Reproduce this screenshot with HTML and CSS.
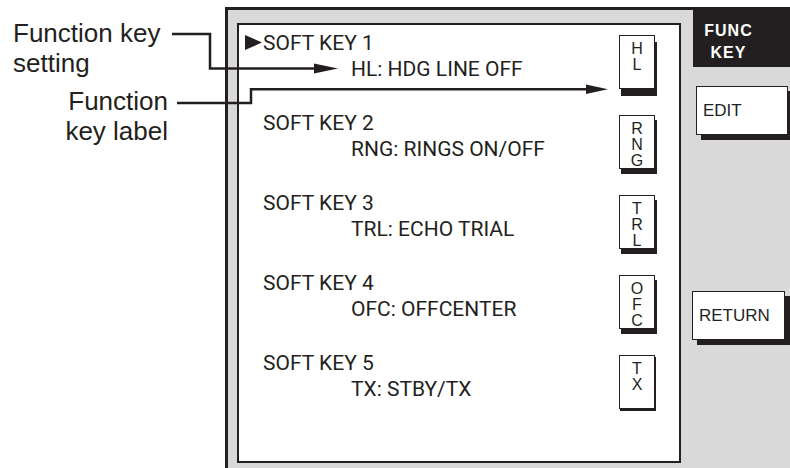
FILE: index.html
```html
<!DOCTYPE html>
<html lang="en">
<head>
  <meta charset="UTF-8" />
  <title>Function Key Menu</title>
  <link rel="stylesheet" href="styles.css">
</head>
<body>
  <div class="page">
    <div class="notes">
      <p class="note note-setting">Function key<br>setting</p>
      <p class="note note-label">Function<br>key label</p>
    </div>

    <div class="screen">
      <div class="display">
        <div class="entry">
          <div class="entry-text">
            <div class="entry-name"><svg class="cursor" width="17" height="15" viewBox="0 0 17 15"><polygon points="0,0 17,7.5 0,15" fill="#231f20"/></svg>SOFT KEY 1</div>
            <div class="entry-func">HL: HDG LINE OFF</div>
          </div>
          <div class="keycap keycap-first">H<br>L</div>
        </div>
        <div class="entry">
          <div class="entry-text">
            <div class="entry-name">SOFT KEY 2</div>
            <div class="entry-func">RNG: RINGS ON/OFF</div>
          </div>
          <div class="keycap">R<br>N<br>G</div>
        </div>
        <div class="entry">
          <div class="entry-text">
            <div class="entry-name">SOFT KEY 3</div>
            <div class="entry-func">TRL: ECHO TRIAL</div>
          </div>
          <div class="keycap">T<br>R<br>L</div>
        </div>
        <div class="entry">
          <div class="entry-text">
            <div class="entry-name">SOFT KEY 4</div>
            <div class="entry-func">OFC: OFFCENTER</div>
          </div>
          <div class="keycap">O<br>F<br>C</div>
        </div>
        <div class="entry">
          <div class="entry-text">
            <div class="entry-name">SOFT KEY 5</div>
            <div class="entry-func">TX: STBY/TX</div>
          </div>
          <div class="keycap keycap-last">T<br>X</div>
        </div>
      </div>

      <div class="menu">
        <div class="menu-title">FUNC<br>KEY</div>
        <div class="menu-btn btn-edit">EDIT</div>
        <div class="menu-btn btn-return">RETURN</div>
      </div>
    </div>

    <!-- callout leaders drawn over the screen -->
    <svg class="leaders" width="790" height="468" viewBox="0 0 790 468">
      <polyline points="172,34 210,34 210,68.5 318,68.5" fill="none" stroke="#231f20" stroke-width="2.5"/>
      <polygon points="314,63.5 338,68.5 314,73.5" fill="#231f20"/>
      <polyline points="177,103 251,103 251,89.3 590,89.3" fill="none" stroke="#231f20" stroke-width="2.5"/>
      <polygon points="586,84.5 608,89.3 586,94" fill="#231f20"/>
    </svg>
  </div>
</body>
</html>
```

FILE: styles.css
```css
body {
  margin: 0;
  background: #fff;
  color: #231f20;
  font-family: "Liberation Sans", Arial, sans-serif;
}
.page {
  position: relative;
  display: flex;
  width: 790px;
  height: 468px;
  overflow: hidden;
}
.notes {
  width: 225px;
  flex-shrink: 0;
  padding-top: 18px;
  box-sizing: border-box;
}
.note {
  margin: 0;
  font-size: 26px;
  line-height: 30px;
}
.note-setting {
  padding-left: 13px;
}
.note-label {
  margin-top: 8px;
  width: 168px;
  text-align: right;
}
.screen {
  flex: 1;
  display: flex;
  align-items: flex-start;
  margin-top: 7px;
  height: 475px;
  padding-left: 9px;
  background: #d9d9d9;
  border-top: 3px solid #231f20;
  border-left: 3px solid #231f20;
}
.display {
  width: 444px;
  height: 440px;
  box-sizing: border-box;
  margin-top: 13px;
  padding: 5px 0 0 24px;
  background: #fff;
  border: 2px solid #231f20;
  display: flex;
  flex-direction: column;
  gap: 21px;
}
.entry {
  display: flex;
  justify-content: space-between;
  align-items: flex-start;
}
.entry-text {
  font-family: Roboto, "Liberation Sans", sans-serif;
  font-size: 21px;
  line-height: 26px;
}
.entry-func {
  padding-left: 88px;
}
.cursor {
  margin-left: -18px;
  margin-right: 1px;
}
.keycap {
  width: 36px;
  height: 54px;
  box-sizing: border-box;
  margin: 5px 24px 0 0;
  padding-top: 5px;
  border: 1px solid #231f20;
  background: #fff;
  box-shadow: 2px 5px 0 #231f20;
  text-align: center;
  font-size: 16px;
  line-height: 16px;
}
.keycap-first {
  box-shadow: 2px 7px 0 #231f20;
}
.keycap-last {
  box-shadow: 1px 2px 0 #231f20;
}
.menu {
  flex: 1;
  display: flex;
  flex-direction: column;
  padding-left: 12px;
}
.menu-title {
  height: 57px;
  box-sizing: border-box;
  padding: 10px 26px 0 0;
  background: #231f20;
  color: #fff;
  font-weight: bold;
  font-size: 16px;
  line-height: 22px;
  letter-spacing: 1px;
  text-align: center;
}
.menu-btn {
  height: 49px;
  box-sizing: border-box;
  display: flex;
  align-items: center;
  padding-left: 6px;
  background: #fff;
  border: 1px solid #231f20;
  box-shadow: 5px 5px 0 #231f20;
  font-size: 17px;
}
.btn-edit {
  margin: 19px 0 0 3px;
  width: 92px;
}
.btn-return {
  margin: 156px 0 0 -1px;
  width: 93px;
}
.leaders {
  position: absolute;
  top: 0;
  left: 0;
  pointer-events: none;
}
```
